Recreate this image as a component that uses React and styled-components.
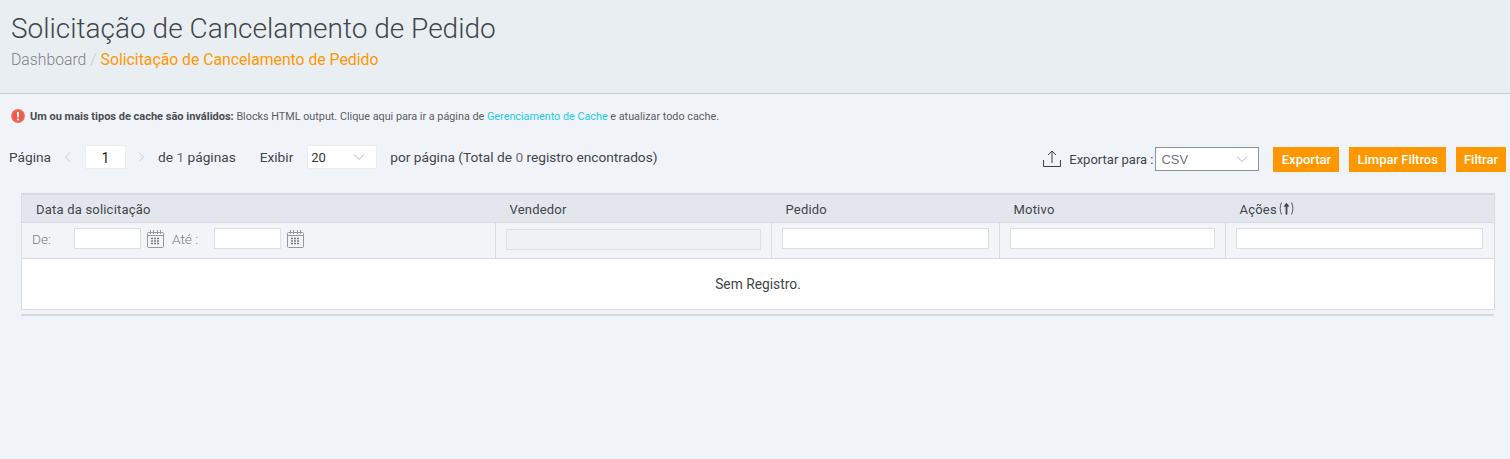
import React from 'react'
import styled, { createGlobalStyle } from 'styled-components'

const GlobalStyle = createGlobalStyle`
  html, body {
    margin: 0;
    padding: 0;
    background: #f0f3f8;
    font-family: Roboto, "Liberation Sans", sans-serif;
    color: #41464b;
  }
  * { box-sizing: border-box; }
`

const Page = styled.div`
  width: 1510px;
  height: 459px;
  overflow: hidden;
`
const Header = styled.header`
  height: 94px;
  padding: 13px 11px 0;
  background: #e9eef2;
  border-bottom: 1px solid #c9ccd2;
`
const Title = styled.h1`
  margin: 0;
  font-size: 28px;
  line-height: 32px;
  font-weight: 300;
  color: #41464b;
`
const Breadcrumb = styled.div`
  margin-top: 5px;
  font-size: 15.75px;
  line-height: 20px;
  font-weight: 300;
  color: #7f8286;
  span { color: #c4c7cb; margin: 0 4px; }
  b { font-weight: 400; color: #ff9800; }
`
const Notice = styled.div`
  display: flex;
  align-items: center;
  gap: 5px;
  margin: 14px 0 0 11px;
  height: 16px;
  font-size: 10.8px;
  color: #5a5d61;
  b { font-size: 11px; font-weight: 700; color: #4a4d51; }
  a { color: #1ecbe1; text-decoration: none; }
`
const Toolbar = styled.div`
  display: flex;
  align-items: center;
  justify-content: space-between;
  height: 26px;
  margin-top: 22px;
  padding: 0 4px 0 9px;
`
const Group = styled.div`
  display: flex;
  align-items: center;
  margin-bottom: ${p => p.$lift || 0}px;
  font-size: ${p => p.$size}px;
`
const Label = styled.span`
  margin-left: ${p => p.$left || 0}px;
  color: #41464b;
  white-space: pre;
  em { font-style: normal; color: #6e7276; }
`
const Arrow = styled.span`
  display: flex;
  margin-left: ${p => p.$left}px;
`
const PageInput = styled.div`
  width: 41px;
  height: 24px;
  margin-left: 11px;
  background: #fff;
  border: 1px solid #ebedf1;
  text-align: center;
  font-size: 14px;
  line-height: 24px;
  color: #222;
`
const PerPage = styled.div`
  display: flex;
  align-items: center;
  justify-content: space-between;
  width: 70px;
  height: 24px;
  margin-left: 14px;
  padding: 0 11px 0 3px;
  background: #fff;
  border: 1px solid #ebedf1;
  font-size: 13px;
  color: #333;
`
const ExportSelect = styled.div`
  display: flex;
  align-items: center;
  justify-content: space-between;
  width: 104px;
  height: 24px;
  margin-left: 2px;
  padding: 0 10px 0 5px;
  background: #fff;
  border: 1px solid #8f9296;
  font-family: "Liberation Sans", Arial, sans-serif;
  font-size: 13px;
  color: #75787c;
`
const Button = styled.button`
  height: 25px;
  min-width: ${p => p.$width}px;
  margin-left: ${p => p.$left}px;
  padding: 0 8px;
  border: 0;
  background: #ff9800;
  color: #fff;
  font-family: inherit;
  font-size: 13px;
  font-weight: 500;
`
const TableWrap = styled.div`
  margin: 21px 16px 0 21px;
  border-bottom: 2px solid #d5d8de;
  padding-bottom: 4px;
`
const Table = styled.table`
  width: 1473px;
  table-layout: fixed;
  border-collapse: collapse;
  background: #fff;
  border: 1px solid #d9dce2;
  border-top: 2px solid #d6d9df;
`
const HeadCell = styled.th`
  height: 28px;
  padding: 2px 0 0 14px;
  text-align: left;
  font-size: 13px;
  font-weight: 400;
  letter-spacing: 0.2px;
  color: #41464b;
  background: #e3e6ed;
`
const SortMark = styled.span`
  display: inline-flex;
  align-items: center;
  margin-left: 2px;
  vertical-align: -1px;
  svg { display: block; }
`
const FilterCell = styled.td`
  height: 36px;
  padding: 0 ${p => p.$right ?? 10}px ${p => p.$bottom ?? 3}px ${p => p.$left ?? 10}px;
  background: #f3f4f8;
  border-top: 1px solid #d6d9df;
  border-bottom: 1px solid #d6d9df;
  border-left: ${p => (p.$first ? 0 : '1px solid #d9dce2')};
`
const TextInput = styled.div`
  height: 21px;
  background: ${p => (p.$disabled ? '#f0f1f5' : '#fff')};
  border: 1px solid #dcdfe4;
`
const DateRow = styled.div`
  display: flex;
  align-items: center;
  font-size: 13.7px;
  font-weight: 300;
  color: #7b7e82;
`
const DateLabel = styled.span`
  width: ${p => p.$width}px;
  margin-left: ${p => p.$left || 0}px;
`
const DateInput = styled.div`
  width: 67px;
  height: 21px;
  background: #fff;
  border: 1px solid #dcdfe4;
`
const CalendarBox = styled.span`
  display: flex;
  margin-left: 6px;
`
const EmptyCell = styled.td`
  height: 51px;
  text-align: center;
  font-size: 13.8px;
  color: #41464b;
  background: #fff;
`

const Chevron = ({ dir = 'down', size = 12, color = '#b4b7bb' }) => {
  const d = {
    down: 'M1 3.5l5 5 5-5',
    left: 'M8 1.5l-4.5 4.5 4.5 4.5',
    right: 'M3 1.5l4.5 4.5-4.5 4.5',
  }[dir]
  return (
    <svg width={size} height={size} viewBox="0 0 12 12" fill="none" stroke={color} strokeWidth="1">
      <path d={d} />
    </svg>
  )
}

const Calendar = () => (
  <svg width="17" height="18" viewBox="0 0 17 18" fill="none" stroke="#96999d" strokeWidth="1">
    <rect x="0.5" y="2.5" width="16" height="15" rx="1" />
    <path d="M0.5 5.5h16M3.5 0v4M6.5 0v4M10.5 0v4M13.5 0v4" />
    <path d="M4 8.5h9M4 11h9M4 13.5h9" strokeWidth="1.6" strokeDasharray="2 1" stroke="#77797d" />
  </svg>
)

const ExportIcon = () => (
  <svg width="18" height="18" viewBox="0 0 18 18" fill="none" stroke="#3c4044" strokeWidth="1">
    <path d="M0.5 10v6.5h17V10M9 13V1M5 5l4-4 4 4" />
  </svg>
)

const AlertIcon = () => (
  <svg width="14" height="14" viewBox="0 0 14 14">
    <circle cx="7" cy="7" r="6.9" fill="#e8705c" />
    <circle cx="7" cy="7" r="5.4" fill="#ee5a46" />
    <rect x="6" y="2.8" width="2" height="5.6" rx="1" fill="#fff" />
    <circle cx="7" cy="10.4" r="1.1" fill="#fff" />
  </svg>
)

const SortArrow = () => (
  <svg width="15" height="13" viewBox="0 0 15 13" fill="none" stroke="#41464b">
    <path d="M2.5 0.5C0.7 4 0.7 9 2.5 12.5M12.5 0.5C14.3 4 14.3 9 12.5 12.5" strokeWidth="0.9" />
    <path d="M7.5 12.5V2" strokeWidth="1.8" />
    <path d="M5 4.4L7.5 1l2.5 3.4z" fill="#41464b" strokeWidth="0.5" />
  </svg>
)

const columns = [
  { title: 'Data da solicitação', width: 474 },
  { title: 'Vendedor', width: 276 },
  { title: 'Pedido', width: 228 },
  { title: 'Motivo', width: 226 },
  { title: 'Ações', width: 269, sortable: true },
]

export default function App() {
  return (
    <Page>
      <GlobalStyle />
      <Header>
        <Title>Solicitação de Cancelamento de Pedido</Title>
        <Breadcrumb>
          Dashboard<span>/</span><b>Solicitação de Cancelamento de Pedido</b>
        </Breadcrumb>
      </Header>
      <Notice>
        <AlertIcon />
        <div>
          <b>Um ou mais tipos de cache são inválidos:</b> Blocks HTML output. Clique aqui para ir a página de{' '}
          <a href="#cache">Gerenciamento de Cache</a> e atualizar todo cache.
        </div>
      </Notice>
      <Toolbar>
        <Group $size={13.7} $lift={4}>
          <Label>Página</Label>
          <Arrow $left={11}><Chevron dir="left" color="#c8cbcf" /></Arrow>
          <PageInput>1</PageInput>
          <Arrow $left={10}><Chevron dir="right" color="#c8cbcf" /></Arrow>
          <Label $left={10}>de <em>1</em> páginas</Label>
          <Label $left={24}>Exibir</Label>
          <PerPage>20<Chevron /></PerPage>
          <Label $left={13}>por página (Total de <em>0</em> registro encontrados)</Label>
        </Group>
        <Group $size={13}>
          <ExportIcon />
          <Label $left={8}>Exportar para :</Label>
          <ExportSelect>CSV<Chevron /></ExportSelect>
          <Button $left={14} $width={66}>Exportar</Button>
          <Button $left={10}>Limpar Filtros</Button>
          <Button $left={10}>Filtrar</Button>
        </Group>
      </Toolbar>
      <TableWrap>
        <Table>
          <colgroup>
            {columns.map(c => <col key={c.title} width={c.width} />)}
          </colgroup>
          <thead>
            <tr>
              {columns.map(c => (
                <HeadCell key={c.title}>
                  {c.title}
                  {c.sortable && <SortMark><SortArrow /></SortMark>}
                </HeadCell>
              ))}
            </tr>
            <tr>
              <FilterCell $first $left={14}>
                <DateRow>
                  <DateLabel $width={42} $left={-4}>De:</DateLabel>
                  <DateInput />
                  <CalendarBox><Calendar /></CalendarBox>
                  <DateLabel $width={42} $left={8}>Até :</DateLabel>
                  <DateInput />
                  <CalendarBox><Calendar /></CalendarBox>
                </DateRow>
              </FilterCell>
              <FilterCell $bottom={2}><TextInput $disabled /></FilterCell>
              <FilterCell><TextInput /></FilterCell>
              <FilterCell><TextInput /></FilterCell>
              <FilterCell $right={11}><TextInput /></FilterCell>
            </tr>
          </thead>
          <tbody>
            <tr>
              <EmptyCell colSpan={5}>Sem Registro.</EmptyCell>
            </tr>
          </tbody>
        </Table>
      </TableWrap>
    </Page>
  )
}
